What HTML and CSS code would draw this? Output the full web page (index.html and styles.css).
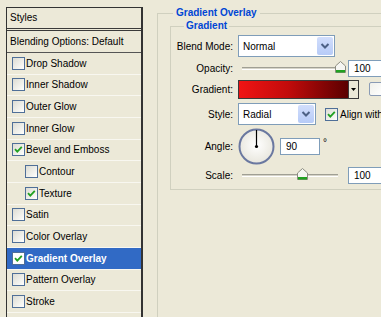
FILE: index.html
```html
<!DOCTYPE html>
<html>
<head>
    <meta charset="UTF-8">
    <title>Layer Style - Gradient Overlay</title>
    <link rel="stylesheet" href="styles.css">
</head>
<body>
<div class="dialog">
    <div class="styles-list">
        <div class="list-head">Styles</div>
        <div class="list-blend">Blending Options: Default</div>
        <div class="list-row"><span class="cb"></span>Drop Shadow</div>
        <div class="list-row"><span class="cb"></span>Inner Shadow</div>
        <div class="list-row"><span class="cb"></span>Outer Glow</div>
        <div class="list-row"><span class="cb"></span>Inner Glow</div>
        <div class="list-row"><span class="cb"><svg viewBox="0 0 11 11"><path d="M2 5.2 L4.3 7.6 L8.8 2.8"/></svg></span>Bevel and Emboss</div>
        <div class="list-row sub"><span class="cb"></span>Contour</div>
        <div class="list-row sub"><span class="cb"><svg viewBox="0 0 11 11"><path d="M2 5.2 L4.3 7.6 L8.8 2.8"/></svg></span>Texture</div>
        <div class="list-row"><span class="cb"></span>Satin</div>
        <div class="list-row"><span class="cb"></span>Color Overlay</div>
        <div class="list-row selected"><span class="cb"><svg viewBox="0 0 11 11"><path d="M2 5.2 L4.3 7.6 L8.8 2.8"/></svg></span>Gradient Overlay</div>
        <div class="list-row"><span class="cb"></span>Pattern Overlay</div>
        <div class="list-row"><span class="cb"></span>Stroke</div>
    </div>

    <div class="options">
        <fieldset class="group outer">
            <legend>Gradient Overlay</legend>
            <fieldset class="group inner">
                <legend>Gradient</legend>
                <div class="form">
                    <label>Blend Mode:</label>
                    <div class="ctrl">
                        <div class="select wide">
                            <span>Normal</span>
                            <span class="drop"><svg viewBox="0 0 14 14"><path d="M3.5 5 L7 8.5 L10.5 5"/></svg></span>
                        </div>
                    </div>

                    <label>Opacity:</label>
                    <div class="ctrl">
                        <div class="slider">
                            <span class="thumb" style="left: 93px"><svg viewBox="0 0 11 12"><path class="cap" d="M0.5 11.5 V5 L5.5 0.5 L10.5 5 V11.5 Z"/><rect class="grip" x="1" y="9" width="9" height="2.5"/></svg></span>
                        </div>
                        <div class="num">100</div>
                    </div>

                    <label>Gradient:</label>
                    <div class="ctrl">
                        <div class="swatch">
                            <span class="ramp"></span>
                            <span class="arrow"><svg viewBox="0 0 7 4"><path d="M0 0 H7 L3.5 4 Z"/></svg></span>
                        </div>
                        <span class="cb reverse"></span>
                    </div>

                    <label>Style:</label>
                    <div class="ctrl">
                        <div class="select short">
                            <span>Radial</span>
                            <span class="drop"><svg viewBox="0 0 14 14"><path d="M3.5 5 L7 8.5 L10.5 5"/></svg></span>
                        </div>
                        <span class="cb align"><svg viewBox="0 0 11 11"><path d="M2 5.2 L4.3 7.6 L8.8 2.8"/></svg></span>
                        <span class="align-label">Align with Layer</span>
                    </div>

                    <label>Angle:</label>
                    <div class="ctrl">
                        <svg class="dial" viewBox="0 0 37 37">
                            <defs>
                                <radialGradient id="dialFill" cx="0.5" cy="0.45" r="0.6">
                                    <stop offset="0" stop-color="#ffffff"/>
                                    <stop offset="1" stop-color="#e6e4da"/>
                                </radialGradient>
                            </defs>
                            <circle cx="18.5" cy="18.5" r="17" fill="url(#dialFill)" stroke="#6a78a0" stroke-width="2"/>
                            <line x1="18.5" y1="18.5" x2="18.5" y2="2" stroke="#000" stroke-width="1.2"/>
                            <circle cx="18.5" cy="18.5" r="1.6" fill="#000"/>
                        </svg>
                        <div class="num angle">90</div>
                        <span class="deg">°</span>
                    </div>

                    <label>Scale:</label>
                    <div class="ctrl">
                        <div class="slider">
                            <span class="thumb" style="left: 55px"><svg viewBox="0 0 11 12"><path class="cap" d="M0.5 11.5 V5 L5.5 0.5 L10.5 5 V11.5 Z"/><rect class="grip" x="1" y="9" width="9" height="2.5"/></svg></span>
                        </div>
                        <div class="num">100</div>
                    </div>
                </div>
            </fieldset>
        </fieldset>
    </div>
</div>
</body>
</html>
```

FILE: styles.css
```css
body {
    margin: 0;
    background: #ece9d8;
    font-family: "Liberation Sans", Arial, sans-serif;
    font-size: 10px;
    color: #000;
    overflow: hidden;
}
.dialog {
    display: flex;
    padding: 7px 0 0 6px;
    height: 317px;
    box-sizing: border-box;
}

/* styles list on the left */
.styles-list {
    flex: none;
    width: 134px;
    border: 1px solid #333;
    border-right-width: 2px;
    border-bottom: none;
}
.list-head {
    height: 20px;
    line-height: 20px;
    padding-left: 3px;
    border-bottom: 3px double #3a3a3a;
}
.list-blend {
    height: 21px;
    line-height: 21px;
    padding-left: 3px;
    border-bottom: 1px solid #555;
}
.list-row {
    height: 20.67px;
    display: flex;
    align-items: center;
    gap: 1px;
    padding-left: 5px;
    border-bottom: 1px solid #f8f7f0;
}
.list-row.sub { padding-left: 18px; }
.list-row.selected {
    background: #316ac5;
    color: #fff;
    font-weight: bold;
}

.cb {
    flex: none;
    width: 13px;
    height: 13px;
    box-sizing: border-box;
    border: 1px solid #4f6f98;
    background: linear-gradient(135deg, #dcdcd4 0%, #f4f4f0 70%, #fff 100%);
    display: flex;
}
.cb svg { width: 11px; height: 11px; }
.cb path {
    fill: none;
    stroke: #21a121;
    stroke-width: 1.8;
}
.selected .cb { background: #fff; }

/* options area */
.options { margin-left: 14px; }
.group {
    margin: 0;
    border: 1px solid #d0d0bf;
    min-width: 0;
}
.group legend {
    color: #0046d5;
    font-weight: bold;
    line-height: 12px;
}
.outer {
    width: 260px;
    height: 330px;
    padding: 0 0 0 12px;
    box-sizing: border-box;
}
.outer > legend { margin-left: 3px; padding: 0 3px; }
.inner {
    margin-top: 1px;
    padding: 2px 0 3px 0;
}
.inner > legend { margin-left: 13px; padding: 0 2px; }

.form {
    display: grid;
    grid-template-columns: 62px auto;
    grid-template-rows: 24px 20px 22px 28px 36px 22px;
    column-gap: 5px;
    align-items: center;
}
.form label { text-align: right; }
.ctrl {
    display: flex;
    align-items: center;
    height: 100%;
}

.select {
    height: 22px;
    box-sizing: border-box;
    border: 1px solid #7f9db9;
    background: #fff;
    display: flex;
    align-items: center;
    padding-left: 4px;
}
.select.wide { width: 97px; }
.select.short { width: 78px; }
.select .drop {
    margin: 1px 1px 1px auto;
    width: 16px;
    height: 18px;
    border-radius: 2px;
    background: linear-gradient(#d2defc, #b7cbf7);
    display: flex;
    align-items: center;
    justify-content: center;
}
.drop svg { width: 14px; height: 14px; }
.drop path {
    fill: none;
    stroke: #4d6185;
    stroke-width: 2;
}

.slider {
    position: relative;
    width: 96px;
    height: 1px;
    margin-left: 4px;
    border-top: 1px solid #a09f94;
    border-bottom: 1px solid #fff;
    background: #d6d4c8;
}
.thumb {
    position: absolute;
    top: -7px;
    width: 11px;
    height: 12px;
}
.thumb svg { display: block; width: 11px; height: 12px; }
.thumb .cap { fill: #f6f6f2; stroke: #8c8c80; stroke-width: 1; }
.thumb .grip { fill: #21a121; }

.num {
    width: 40px;
    height: 17px;
    box-sizing: border-box;
    border: 1px solid #7f9db9;
    background: #fff;
    padding-left: 5px;
    line-height: 15px;
    margin-left: 10px;
    flex: none;
}
.num.angle { margin-left: 5px; }
.deg {
    align-self: flex-start;
    margin: 9px 0 0 3px;
}

.swatch {
    width: 121px;
    height: 19px;
    box-sizing: border-box;
    border: 1px solid #3a3a3a;
    display: flex;
}
.ramp {
    flex: 1;
    border-right: 1px solid #3a3a3a;
    background: linear-gradient(to right, #f01414, #c20b0b 45%, #5a0000);
}
.arrow {
    width: 9px;
    background: #ece9d8;
    display: flex;
    align-items: center;
    justify-content: center;
}
.arrow svg { width: 5px; height: 3px; }
.arrow path { fill: #000; }
.cb.reverse {
    width: 14px;
    height: 14px;
    margin-left: 10px;
    border-color: #8a9bb5;
    border-radius: 2px;
    background: linear-gradient(135deg, #f0f0ea, #fff);
}
.cb.align { margin-left: 9px; }
.align-label { margin-left: 2px; white-space: nowrap; }

.dial { width: 37px; height: 37px; flex: none; }
```
